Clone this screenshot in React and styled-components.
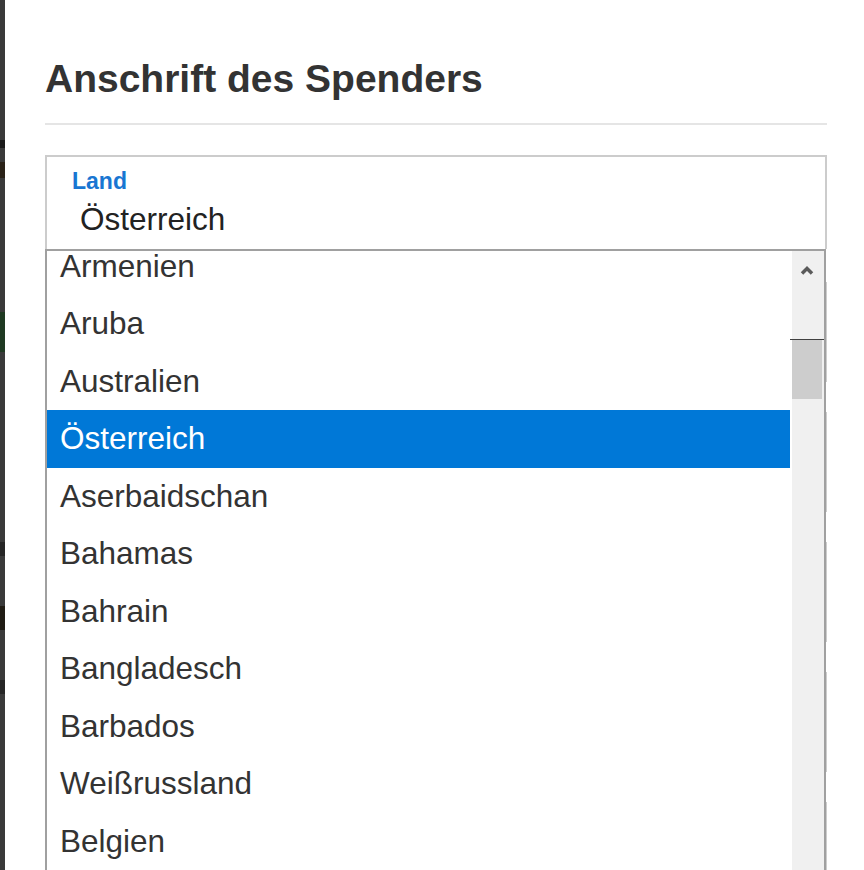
import React from "react";
import styled, { createGlobalStyle } from "styled-components";

const GlobalStyle = createGlobalStyle`
  html, body {
    margin: 0;
    padding: 0;
    background: #ffffff;
    overflow: hidden;
  }
  body {
    font-family: "Liberation Sans", Arial, sans-serif;
  }
`;

const Page = styled.div`
  display: flex;
  width: 864px;
  height: 870px;
  overflow: hidden;
`;

const Backdrop = styled.div`
  flex: 0 0 5px;
  display: flex;
  flex-direction: column;
  background: #3a3a3a;
`;

const BackdropMark = styled.div`
  height: ${p => p.h}px;
  margin-top: ${p => p.top}px;
  background: ${p => p.color};
`;

const Panel = styled.div`
  flex: 1;
  padding: 56px 37px 0 40px;
  background: #ffffff;
`;

const Title = styled.h2`
  margin: 0;
  font-size: 39px;
  line-height: 45px;
  font-weight: bold;
  color: #333333;
`;

const Divider = styled.hr`
  margin: 22px 0 30px;
  border: 0;
  height: 2px;
  background: #e5e5e5;
`;

const Form = styled.div`
  display: flex;
  flex-direction: column;
  gap: 30px;
`;

const FieldBox = styled.div`
  position: relative;
  box-sizing: border-box;
  height: ${p => p.h}px;
  border: 2px solid #cccccc;
  border-bottom: ${p => (p.open ? "0" : "2px solid #cccccc")};
  padding: 11px 25px 0;
  margin-bottom: ${p => (p.open ? "3px" : "0")};
`;

const Label = styled.div`
  font-size: 23px;
  line-height: 26px;
  font-weight: bold;
  color: #1976d2;
`;

const Value = styled.div`
  margin-top: 7px;
  padding-left: 8px;
  font-size: 31.5px;
  line-height: 36px;
  color: #222222;
`;

const Dropdown = styled.div`
  position: absolute;
  top: 100%;
  left: -2px;
  right: -1px;
  height: 640px;
  box-sizing: border-box;
  display: flex;
  background: #ffffff;
  border: 2px solid #a0a0a0;
  border-bottom: 0;
  z-index: 5;
`;

const Options = styled.ul`
  flex: 1;
  margin: 0;
  padding: 0;
  list-style: none;
  overflow: hidden;
`;

const OptionsInner = styled.div`
  margin-top: -13.5px;
`;

const Option = styled.li`
  height: 57.5px;
  line-height: 57.5px;
  padding-left: 13px;
  margin-right: 2px;
  font-size: 31.5px;
  white-space: nowrap;
  color: ${p => (p.selected ? "#ffffff" : "#333333")};
  background: ${p => (p.selected ? "#0078d7" : "transparent")};
`;

const Scrollbar = styled.div`
  flex: 0 0 32px;
  display: flex;
  flex-direction: column;
  background: #f0f0f0;
`;

const ArrowButton = styled.div`
  height: 38px;
  display: flex;
  align-items: center;
  justify-content: center;
  padding-right: 2px;
`;

const Thumb = styled.div`
  position: relative;
  height: 59px;
  margin: 51px 2px 0 0;
  background: #cdcdcd;
  &::before {
    content: "";
    position: absolute;
    top: -1px;
    left: -2px;
    right: -2px;
    height: 1px;
    background: #404040;
  }
`;

const countries = [
  "Armenien",
  "Aruba",
  "Australien",
  "Österreich",
  "Aserbaidschan",
  "Bahamas",
  "Bahrain",
  "Bangladesch",
  "Barbados",
  "Weißrussland",
  "Belgien",
];

function ChevronUp() {
  return (
    <svg width="16" height="12" viewBox="0 0 16 12">
      <path
        d="M3 9.5 L8 4.5 L13 9.5"
        fill="none"
        stroke="#5a5a5a"
        strokeWidth="3.5"
        strokeLinejoin="miter"
      />
    </svg>
  );
}

export default function App() {
  const selected = "Österreich";
  return (
    <>
      <GlobalStyle />
      <Page>
        <Backdrop>
          <BackdropMark top={140} h={8} color="#1a1a1a" />
          <BackdropMark top={14} h={16} color="#2a2218" />
          <BackdropMark top={134} h={40} color="#1f3a22" />
          <BackdropMark top={190} h={14} color="#262626" />
          <BackdropMark top={50} h={24} color="#201c14" />
          <BackdropMark top={50} h={14} color="#262626" />
        </Backdrop>
        <Panel>
          <Title>Anschrift des Spenders</Title>
          <Divider />
          <Form>
            <FieldBox h={94} open>
              <Label>Land</Label>
              <Value>{selected}</Value>
              <Dropdown>
                <Options>
                  <OptionsInner>
                    {countries.map(c => (
                      <Option key={c} selected={c === selected}>
                        {c}
                      </Option>
                    ))}
                  </OptionsInner>
                </Options>
                <Scrollbar>
                  <ArrowButton>
                    <ChevronUp />
                  </ArrowButton>
                  <Thumb />
                </Scrollbar>
              </Dropdown>
            </FieldBox>
            <FieldBox h={100} />
            <FieldBox h={100} />
            <FieldBox h={100} />
            <FieldBox h={100} />
            <FieldBox h={100} />
          </Form>
        </Panel>
      </Page>
    </>
  );
}
